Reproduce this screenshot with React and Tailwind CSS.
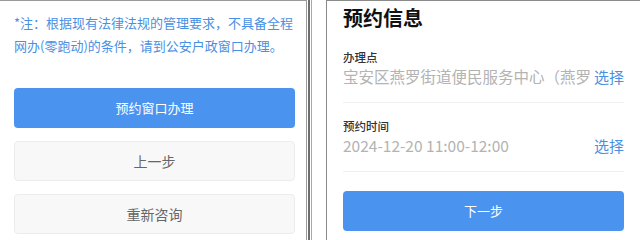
import React from 'react';

const font = { fontFamily: '"Noto Sans CJK SC", "Noto Sans", sans-serif' };

const InfoRow = ({ label, value, top }) => (
  <div className={`${top} border-b border-[#f0f0f0] pb-[15px]`}>
    <div className="h-[18px] flex items-center text-[11.5px] font-medium text-[#333]">{label}</div>
    <div className="h-[20px] flex items-center min-w-0">
      <span className="flex-1 min-w-0 overflow-hidden whitespace-nowrap text-[15.5px] text-[#b3b3b3]">{value}</span>
      <span className="shrink-0 ml-[4px] text-[15px] text-[#4a90e2]">选择</span>
    </div>
  </div>
);

export default function App() {
  return (
    <div className="w-[640px] h-[240px] bg-white flex overflow-hidden" style={font}>
      {/* 左侧：提示与操作 */}
      <div className="shrink-0 w-[307px] h-full border-t border-r border-[#9a9a9a] pl-[14px] pr-[11px] pt-[10px]">
        <p className="text-[13px] leading-[23px] text-[#4a90e2] whitespace-nowrap">
          *注：根据现有法律法规的管理要求，不具备全程<br />
          网办(零跑动)的条件，请到公安户政窗口办理。
        </p>
        <button className="mt-[31px] w-full h-[40px] rounded-[4px] bg-[#4a94f0] text-white text-[13px]">
          预约窗口办理
        </button>
        <button className="mt-[13px] w-full h-[40px] rounded-[4px] bg-[#f8f8f8] border border-[#ececec] text-[#666] text-[14px]">
          上一步
        </button>
        <button className="mt-[13px] w-full h-[40px] rounded-[4px] bg-[#f8f8f8] border border-[#ececec] text-[#666] text-[14px]">
          重新咨询
        </button>
      </div>

      {/* 分隔 */}
      <div className="shrink-0 w-[19px] h-full flex">
        <div className="ml-[1px] w-[2px] h-full bg-[#6e6e6e]" />
        <div className="ml-[1px] w-[1px] h-full bg-[#a8a8a8]" />
      </div>

      {/* 右侧：预约信息 */}
      <div className="flex-1 min-w-0 h-full border-t border-l border-[#8a8a8a] px-[16px]">
        <div className="h-[34px] flex items-center text-[20px] font-bold text-[#111]">预约信息</div>
        <InfoRow top="mt-[14px]" label="办理点" value="宝安区燕罗街道便民服务中心（燕罗街道行政服务大厅）" />
        <InfoRow top="mt-[15px]" label="预约时间" value="2024-12-20 11:00-12:00" />
        <button className="mt-[19px] w-full h-[40px] rounded-[4px] bg-[#4a94f0] text-white text-[13px]">
          下一步
        </button>
      </div>
    </div>
  );
}
